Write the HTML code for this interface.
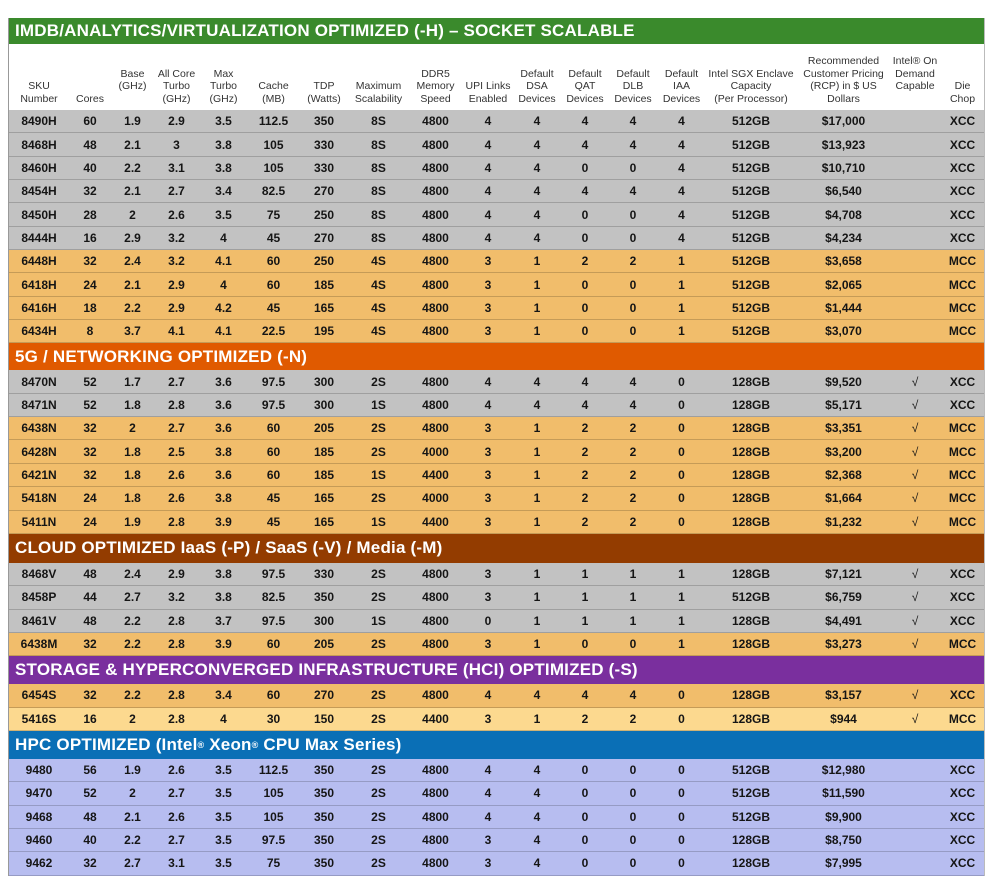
<!DOCTYPE html>
<html><head><meta charset="utf-8"><style>
body{margin:0;background:#fff;width:1000px;height:893px;overflow:hidden;font-family:"Liberation Sans",sans-serif;}
#t{position:absolute;left:8px;top:18px;width:977px;border-left:1px solid #999;border-right:1px solid #bbb;box-sizing:border-box;}
.s{color:#fff;font-weight:bold;font-size:17px;padding-left:6px;box-sizing:border-box;display:flex;align-items:center;letter-spacing:0.2px;white-space:pre;}
.r{display:flex;height:23.35px;box-sizing:border-box;border-bottom:1px solid rgba(0,0,0,0.18);font-weight:bold;font-size:12px;color:#151515;align-items:center;}
.r span,.h span{text-align:center;flex:none;}
.h{display:flex;height:66px;align-items:flex-end;padding-bottom:5px;box-sizing:border-box;font-size:10.5px;color:#333;line-height:12.5px;background:#fff;}
.g{background:#c2c2c2}.o{background:#f1bd6b}.y{background:#fcd98f}.l{background:#b7bdf0}
</style></head><body><div id="t">
<div class="s" style="height:26px;background:#3a8a2c">IMDB/ANALYTICS/VIRTUALIZATION OPTIMIZED (-H) – SOCKET SCALABLE</div>
<div class="h" id="hd"></div>
<div id="body"></div>
</div>
<script>
var w=[60,42,43,45,49,51,50,59,55,50,48,48,48,49,90,95,48,47];
var hdr=["SKU<br>Number","Cores","Base<br>(GHz)<br>&nbsp;","All Core<br>Turbo<br>(GHz)","Max<br>Turbo<br>(GHz)","Cache<br>(MB)","TDP<br>(Watts)","Maximum<br>Scalability","DDR5<br>Memory<br>Speed","UPI Links<br>Enabled","Default<br>DSA<br>Devices","Default<br>QAT<br>Devices","Default<br>DLB<br>Devices","Default<br>IAA<br>Devices","Intel SGX Enclave<br>Capacity<br>(Per Processor)","Recommended<br>Customer Pricing<br>(RCP) in $ US<br>Dollars","Intel® On<br>Demand<br>Capable<br>&nbsp;","Die<br>Chop"];
var h="";for(var i=0;i<18;i++)h+='<span style="width:'+w[i]+'px">'+hdr[i]+'</span>';
document.getElementById('hd').innerHTML=h;
var D=[
["g","8490H 60 1.9 2.9 3.5 112.5 350 8S 4800 4 4 4 4 4 512GB $17,000 - XCC"],
["g","8468H 48 2.1 3 3.8 105 330 8S 4800 4 4 4 4 4 512GB $13,923 - XCC"],
["g","8460H 40 2.2 3.1 3.8 105 330 8S 4800 4 4 0 0 4 512GB $10,710 - XCC"],
["g","8454H 32 2.1 2.7 3.4 82.5 270 8S 4800 4 4 4 4 4 512GB $6,540 - XCC"],
["g","8450H 28 2 2.6 3.5 75 250 8S 4800 4 4 0 0 4 512GB $4,708 - XCC"],
["g","8444H 16 2.9 3.2 4 45 270 8S 4800 4 4 0 0 4 512GB $4,234 - XCC"],
["o","6448H 32 2.4 3.2 4.1 60 250 4S 4800 3 1 2 2 1 512GB $3,658 - MCC"],
["o","6418H 24 2.1 2.9 4 60 185 4S 4800 3 1 0 0 1 512GB $2,065 - MCC"],
["o","6416H 18 2.2 2.9 4.2 45 165 4S 4800 3 1 0 0 1 512GB $1,444 - MCC"],
["o","6434H 8 3.7 4.1 4.1 22.5 195 4S 4800 3 1 0 0 1 512GB $3,070 - MCC"],
["S","5G / NETWORKING OPTIMIZED (-N)","#e05a00",27],
["g","8470N 52 1.7 2.7 3.6 97.5 300 2S 4800 4 4 4 4 0 128GB $9,520 √ XCC"],
["g","8471N 52 1.8 2.8 3.6 97.5 300 1S 4800 4 4 4 4 0 128GB $5,171 √ XCC"],
["o","6438N 32 2 2.7 3.6 60 205 2S 4800 3 1 2 2 0 128GB $3,351 √ MCC"],
["o","6428N 32 1.8 2.5 3.8 60 185 2S 4000 3 1 2 2 0 128GB $3,200 √ MCC"],
["o","6421N 32 1.8 2.6 3.6 60 185 1S 4400 3 1 2 2 0 128GB $2,368 √ MCC"],
["o","5418N 24 1.8 2.6 3.8 45 165 2S 4000 3 1 2 2 0 128GB $1,664 √ MCC"],
["o","5411N 24 1.9 2.8 3.9 45 165 1S 4400 3 1 2 2 0 128GB $1,232 √ MCC"],
["S","CLOUD OPTIMIZED IaaS (-P) / SaaS (-V) / Media (-M)","#933c00",29],
["g","8468V 48 2.4 2.9 3.8 97.5 330 2S 4800 3 1 1 1 1 128GB $7,121 √ XCC"],
["g","8458P 44 2.7 3.2 3.8 82.5 350 2S 4800 3 1 1 1 1 512GB $6,759 √ XCC"],
["g","8461V 48 2.2 2.8 3.7 97.5 300 1S 4800 0 1 1 1 1 128GB $4,491 √ XCC"],
["o","6438M 32 2.2 2.8 3.9 60 205 2S 4800 3 1 0 0 1 128GB $3,273 √ MCC"],
["S","STORAGE &amp; HYPERCONVERGED INFRASTRUCTURE (HCI) OPTIMIZED (-S)","#7a2f9e",28],
["o","6454S 32 2.2 2.8 3.4 60 270 2S 4800 4 4 4 4 0 128GB $3,157 √ XCC"],
["y","5416S 16 2 2.8 4 30 150 2S 4400 3 1 2 2 0 128GB $944 √ MCC"],
["S","HPC OPTIMIZED (Intel<sup style='font-size:9px'>®</sup>&nbsp;Xeon<sup style='font-size:9px'>®</sup>&nbsp;CPU Max Series)","#0a6fb6",28],
["l","9480 56 1.9 2.6 3.5 112.5 350 2S 4800 4 4 0 0 0 512GB $12,980 - XCC"],
["l","9470 52 2 2.7 3.5 105 350 2S 4800 4 4 0 0 0 512GB $11,590 - XCC"],
["l","9468 48 2.1 2.6 3.5 105 350 2S 4800 4 4 0 0 0 512GB $9,900 - XCC"],
["l","9460 40 2.2 2.7 3.5 97.5 350 2S 4800 3 4 0 0 0 128GB $8,750 - XCC"],
["l","9462 32 2.7 3.1 3.5 75 350 2S 4800 3 4 0 0 0 128GB $7,995 - XCC"]];
var b="";
D.forEach(function(r){
 if(r[0]=="S"){b+='<div class="s" style="height:'+r[3]+'px;background:'+r[2]+'">'+r[1]+'</div>';return;}
 var c=r[1].split(" ");b+='<div class="r '+r[0]+'">';
 for(var i=0;i<18;i++){var v=c[i]=="-"?"":c[i];b+='<span style="width:'+w[i]+'px'+(i==16?';font-weight:normal':'')+'">'+v+'</span>';}
 b+='</div>';});
document.getElementById('body').innerHTML=b;
</script>
</body></html>
